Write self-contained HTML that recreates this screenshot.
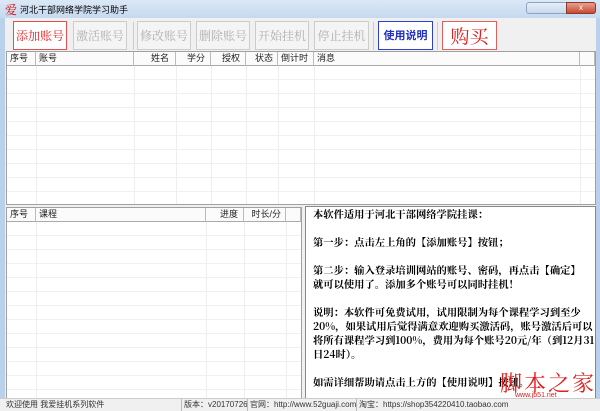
<!DOCTYPE html>
<html><head><meta charset="utf-8"><style>
*{margin:0;padding:0;box-sizing:border-box}
html,body{width:600px;height:411px;overflow:hidden}
body{background:#b9d1ea;font-family:"Liberation Sans","Noto Sans CJK SC",sans-serif;font-size:9px;color:#000;position:relative}
.title{position:absolute;left:0;top:0;width:600px;height:18px;background:linear-gradient(#dbe8f6,#c5d9ef)}
.win{position:absolute;left:5px;top:18px;width:591px;height:393px;background:#f0f0f0}
.btn{position:absolute;top:21px;height:29px;border:1px solid #ccc;background:#f4f4f4;color:#b0b0b0;font-family:"Noto Serif CJK SC",serif;font-size:12px;text-align:center;line-height:27px}
.tbl{position:absolute;background:#fff;border:1px solid #a0a0a0}
.hd{position:absolute;top:0;height:14px;border-right:1px solid #bbb;border-bottom:1px solid #aaa;background:#fbfbfb;line-height:13px;padding-left:3px;font-size:9px;color:#222}
.vl{position:absolute;width:1px;background:#eee}
.txt{position:absolute;left:305px;top:206px;width:291px;height:193px;overflow:hidden;background:#fff;border:1px solid #888;padding:0 0 0 7px;font-family:"Noto Serif CJK SC",serif;font-weight:bold;font-size:10.3px;line-height:14px;white-space:nowrap}
.txt p{margin-bottom:14px}
.sb{position:absolute;top:399px;height:12px;line-height:12px;font-size:8px;color:#333;border-left:1px solid #bbb;padding-left:2px;white-space:nowrap;overflow:hidden}
</style></head><body>
<div class="title"><span style="position:absolute;left:5px;top:1px;color:#d00;font-size:12px;font-family:'Noto Serif CJK SC',serif">爱</span><span style="position:absolute;left:20px;top:3px;font-size:9px">河北干部网络学院学习助手</span>
<div style="position:absolute;left:526px;top:2px;width:70px;height:12px;border-radius:3px;background:linear-gradient(#e6eef8,#c9d8ec);border:1px solid #8ea4c2"></div>
<div style="position:absolute;left:566px;top:2px;width:30px;height:12px;border-radius:0 3px 3px 0;background:linear-gradient(#e8a090,#c84a30);border:1px solid #8a3a2a;color:#fff;font-size:8px;text-align:center;line-height:10px">x</div></div>
<div class="win"></div>
<div class="btn" style="left:13px;width:54px;border:1px solid #e05050;color:#e02020;background:#fff">添加账号</div>
<div class="btn" style="left:73px;width:54px">激活账号</div>
<div class="btn" style="left:137px;width:54px">修改账号</div>
<div class="btn" style="left:196px;width:54px">删除账号</div>
<div class="btn" style="left:255px;width:54px">开始挂机</div>
<div class="btn" style="left:314px;width:55px">停止挂机</div>
<div class="btn" style="left:378px;width:55px;border:1px solid #3040d0;color:#2030c0;font-weight:bold;font-size:11px;background:#fff;font-family:'Noto Sans CJK SC',sans-serif">使用说明</div>
<div class="btn" style="left:442px;width:55px;border:1px solid #e06060;color:#e02020;font-size:19px;background:#fff">购买</div>
<div style="position:absolute;left:133px;top:22px;width:1px;height:28px;background:#ccc"></div>
<div style="position:absolute;left:373px;top:22px;width:1px;height:28px;background:#ccc"></div>
<div style="position:absolute;left:437px;top:22px;width:1px;height:28px;background:#ccc"></div>

<div class="tbl" style="left:6px;top:51px;width:590px;height:154px;background:repeating-linear-gradient(#fff 0 13px,#f0f0f0 13px 14px)">
<div class="hd" style="left:0;width:29px">序号</div>
<div class="hd" style="left:29px;width:98px">账号</div>
<div class="hd" style="left:127px;width:42px;text-align:right;padding-right:6px">姓名</div>
<div class="hd" style="left:169px;width:35px;text-align:right;padding-right:5px">学分</div>
<div class="hd" style="left:204px;width:35px;text-align:right;padding-right:5px">授权</div>
<div class="hd" style="left:239px;width:32px;text-align:right;padding-right:4px">状态</div>
<div class="hd" style="left:271px;width:36px">倒计时</div>
<div class="hd" style="left:307px;width:266px">消息</div>
<div class="hd" style="left:573px;width:15px"></div>
<div class="vl" style="left:29px;top:14px;height:138px"></div><div class="vl" style="left:127px;top:14px;height:138px"></div><div class="vl" style="left:169px;top:14px;height:138px"></div><div class="vl" style="left:204px;top:14px;height:138px"></div><div class="vl" style="left:239px;top:14px;height:138px"></div><div class="vl" style="left:271px;top:14px;height:138px"></div><div class="vl" style="left:307px;top:14px;height:138px"></div><div class="vl" style="left:573px;top:14px;height:138px"></div>
</div>

<div class="tbl" style="left:6px;top:207px;width:296px;height:192px;background:repeating-linear-gradient(#fff 0 13px,#f0f0f0 13px 14px)">
<div class="hd" style="left:0;width:29px">序号</div>
<div class="hd" style="left:29px;width:170px">课程</div>
<div class="hd" style="left:199px;width:38px;text-align:right;padding-right:5px">进度</div>
<div class="hd" style="left:237px;width:42px;text-align:right;padding-right:4px">时长/分</div>
<div class="hd" style="left:279px;width:15px"></div>
<div class="vl" style="left:29px;top:14px;height:176px"></div><div class="vl" style="left:199px;top:14px;height:176px"></div><div class="vl" style="left:237px;top:14px;height:176px"></div><div class="vl" style="left:279px;top:14px;height:176px"></div>
</div>

<div class="txt">
<p>本软件适用于河北干部网络学院挂课：</p>
<p>第一步：点击左上角的【添加账号】按钮；</p>
<p>第二步：输入登录培训网站的账号、密码，再点击【确定】<br>就可以使用了。添加多个账号可以同时挂机！</p>
<p>说明：本软件可免费试用，试用限制为每个课程学习到至少<br>20%，如果试用后觉得满意欢迎购买激活码，账号激活后可以<br>将所有课程学习到100%，费用为每个账号20元/年（到12月31<br>日24时）。</p>
<p>如需详细帮助请点击上方的【使用说明】按钮。</p>
</div>
<div style="position:absolute;left:500px;top:370px;color:#e02020;font-size:22px;font-family:'Noto Serif CJK SC',serif;letter-spacing:2px;line-height:26px">脚本之家</div>
<div style="position:absolute;left:515px;top:392px;color:#e02020;font-size:7px;line-height:7px">www.jb51.net</div>

<div style="position:absolute;left:0;top:398px;width:600px;height:13px;background:#f0f0f0;border-top:1px solid #ccc"></div>
<div class="sb" style="left:4px;border:0">欢迎使用 我爱挂机系列软件</div>
<div class="sb" style="left:181px;width:66px">版本：v20170726</div>
<div class="sb" style="left:247px;width:109px">官网：http://www.52guaji.com</div>
<div class="sb" style="left:356px;width:160px">淘宝：https://shop354220410.taobao.com</div>
</body></html>
